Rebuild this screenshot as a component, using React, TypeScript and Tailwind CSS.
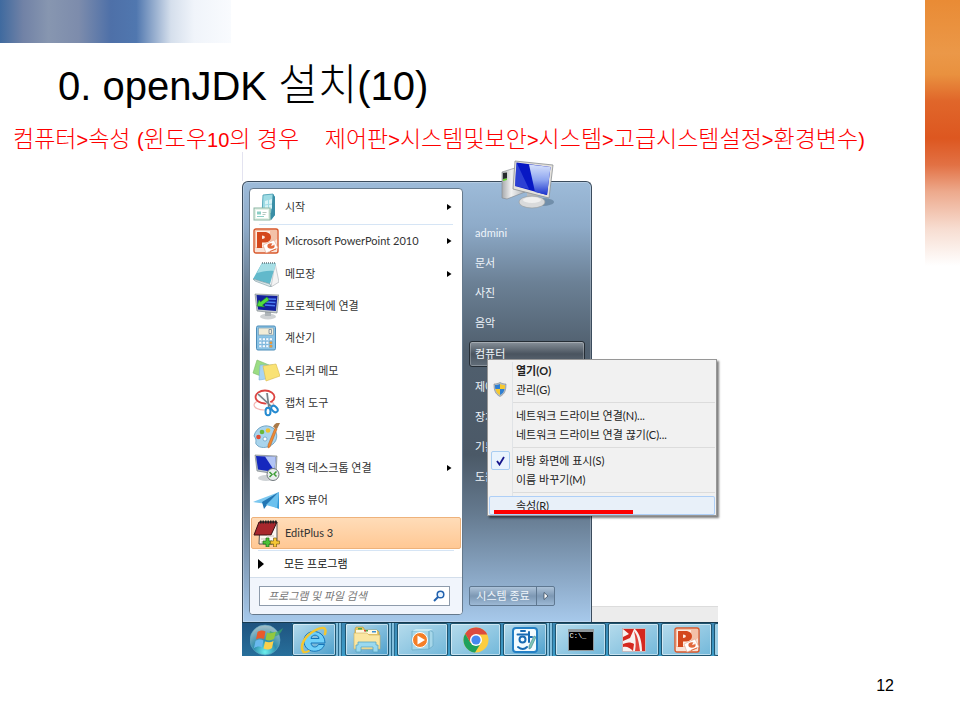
import type { ReactNode } from "react";

function StartGuideIcon() {
  return (
    <svg width="26" height="28" viewBox="0 0 26 28" aria-hidden="true">
      <path d="M10 2 L20 1 L22 4 V22 L18 27 L9 22 Z" fill="#5fb4c6" />
      <path d="M10 2 L20 1 V20 L9 22 Z" fill="#9edbe4" stroke="#4b9fb2" strokeWidth=".8" />
      <path d="M20 1 L22 4 V22 L18 27 L18 20 Z" fill="#3a8ea6" />
      <path d="M12 8 l3 -1 v4 l-3 .5z M16 7 l3 -1 v4.5 l-3 .5z M12 12.500 l3-.5 v4 l-3 .5z M16 12 l3-.5 v4 l-3 .5z" fill="#d9f4f7" />
      <rect x="1" y="15" width="16" height="12" fill="#e4f2e8" stroke="#8bb5a4" />
      <rect x="3" y="17" width="12" height="8" fill="#fff" />
      <path d="M4 18.500h4v3H4zM4 23h7v1H4z" fill="#8ccfc6" />
      <path d="M9.500 19h4v1h-4zM9.500 21h3v1h-3z" fill="#b5c8c0" />
    </svg>
  );
}

function PowerPointIcon() {
  return (
    <svg width="26" height="26" viewBox="0 0 26 26" aria-hidden="true">
      <rect x="1" y="1" width="24" height="24" rx="2" fill="#f9e3d8" stroke="#d8582b" strokeWidth="1.4" />
      <path d="M2 2h22v9L14 20H2z" fill="#f3c1a8" />
      <path d="M3 3h14v13l-5 3H3z" fill="#fdebe0" />
      <path d="M4 4h7.500c8.500 0 8.500 10 1 10.500H9V20H4z M9 7.500v3.500c3.800 0 3.800-3.500 0-3.500z" fill="#d4481c" fillRule="evenodd" />
      <path d="M10 17l11-5 4 8-12 5z" fill="#fff" stroke="#e5a58b" strokeWidth=".6" />
      <ellipse cx="18" cy="18" rx="3.600" ry="2.800" fill="#e2683c" />
      <path d="M18 18l1.500-3 2 2z" fill="#fff" />
      <path d="M17 23.500l6-2.500" stroke="#e2683c" />
    </svg>
  );
}

function NotepadIcon() {
  return (
    <svg width="26" height="26" viewBox="0 0 26 26" aria-hidden="true">
      <path d="M22 2l4 19-8 5z" fill="#f4f4f4" stroke="#a8afb3" strokeWidth=".6" />
      <path d="M9 2l14 0-6 21L0 18z" fill="#62b9cb" />
      <path d="M9 2l14 0-2 8C14 9 9 11 4 12z" fill="#a7dfe6" />
      <path d="M0 18l17 5 1 3L2 20z" fill="#dce8ea" stroke="#7a979f" strokeWidth=".6" />
      <path d="M9 2h14" stroke="#65777d" strokeWidth="1.500" strokeDasharray="1 1" />
    </svg>
  );
}

function ProjectorIcon() {
  return (
    <svg width="26" height="27" viewBox="0 0 26 27" aria-hidden="true">
      <ellipse cx="15" cy="23.500" rx="8" ry="3" fill="#cfd2d4" />
      <path d="M12 18h6v5h-6z" fill="#aeb4b8" />
      <path d="M2 1l24 1-2 18L4 18z" fill="#c6cccf" stroke="#747d83" strokeWidth=".6" />
      <path d="M3.500 2l21 1-1.600 15L5 16.500z" fill="#13209c" />
      <path d="M14 6l9 .3M13 9l9.500.5M12 12l10 .8" stroke="#4c7df0" strokeWidth="1.600" />
      <path d="M4 13l2-6 1.500 2L14 4l2 3-6.500 5 2 2z" fill="#52dd3d" stroke="#238a24" strokeWidth=".6" />
    </svg>
  );
}

function CalculatorIcon() {
  const cols = [6, 9.5, 13, 16.5];
  const rows = [13, 16.5, 20];
  return (
    <svg width="26" height="26" viewBox="0 0 26 26" aria-hidden="true">
      <rect x="3.500" y="1" width="19" height="24" rx="1.500" fill="#8cc4e6" stroke="#4d8db9" />
      <rect x="5.500" y="3" width="15" height="7" fill="#f2ecd7" stroke="#7ba0b6" strokeWidth=".7" />
      <path d="M16 4.500h2.500v4H16z" fill="none" stroke="#72869b" strokeWidth=".8" />
      {rows.map((y) =>
        cols.map((x) => (
          <rect key={`${x}-${y}`} x={x} y={y} width="2.700" height="2.500" fill={x > 16 && y > 13 ? "#f09a35" : "#f4faff"} stroke="#5b9cc9" strokeWidth=".3" />
        )),
      )}
    </svg>
  );
}

function StickyNotesIcon() {
  return (
    <svg width="28" height="26" viewBox="0 0 28 26" aria-hidden="true">
      <path d="M5 2l12 5-3 13L1 15z" fill="#9bdc83" stroke="#7ebb68" strokeWidth=".6" />
      <path d="M8 7h13v13l-14 2z" fill="#a7d4f3" stroke="#7bb2d8" strokeWidth=".6" />
      <path d="M11 8l13-2 4 12-14 5z" fill="#f9e274" stroke="#d8bb4b" strokeWidth=".6" />
    </svg>
  );
}

function SnippingIcon() {
  return (
    <svg width="26" height="28" viewBox="0 0 26 28" aria-hidden="true">
      <ellipse cx="11" cy="16" rx="10" ry="5" fill="none" stroke="#f3b5b2" strokeWidth="1.200" />
      <ellipse cx="12" cy="8" rx="9.500" ry="6.500" fill="#fff" stroke="#dc4340" strokeWidth="1.800" />
      <path d="M5 5l14 12M14 4l2 15" stroke="#f4f6f7" strokeWidth="3.500" />
      <path d="M5 5l14 13M14 4l2 15" stroke="#768086" strokeWidth="1.700" />
      <ellipse cx="15" cy="22.500" rx="2.500" ry="3.700" fill="#fff" stroke="#248ad0" strokeWidth="2" />
      <ellipse cx="21.500" cy="20" rx="3.700" ry="2.500" transform="rotate(45 21.500 20)" fill="#fff" stroke="#248ad0" strokeWidth="2" />
    </svg>
  );
}

function PaintIcon() {
  return (
    <svg width="27" height="27" viewBox="0 0 27 27" aria-hidden="true">
      <path d="M1 14C3 5 13 1 20 6c5 4 5 12 0 16-6 5-14 4-16 1-3-2 1-4-3-9z" fill="#a9d4ec" stroke="#6099bd" strokeWidth=".8" />
      <circle cx="5.500" cy="15" r="2.300" fill="#e04b34" />
      <circle cx="9" cy="10" r="2.300" fill="#68b83b" />
      <circle cx="15" cy="8.500" r="2.300" fill="#f1c22d" />
      <circle cx="12" cy="17" r="2" fill="#fff" stroke="#6099bd" strokeWidth=".7" />
      <path d="M22 6l2 1-7 18-2 1v-3z" fill="#ef8a34" stroke="#b25b1a" strokeWidth=".5" />
      <path d="M20 5c2-5 5-4 7-4l-3 6z" fill="#aa7a4a" />
    </svg>
  );
}

function RemoteDesktopIcon() {
  return (
    <svg width="28" height="28" viewBox="0 0 28 28" aria-hidden="true">
      <ellipse cx="14" cy="24" rx="8" ry="3" fill="#cfd3d6" />
      <path d="M3 1l22 1-1 18-19-3z" fill="#bdc6cb" stroke="#6c7378" strokeWidth=".6" />
      <path d="M4 2l19.500 1-1 15L6 15.500z" fill="#1528bd" />
      <path d="M13 2.500l10.500.5-1 14z" fill="#b2c4f5" />
      <circle cx="21" cy="20.500" r="6" fill="#e9edef" stroke="#70787c" />
      <path d="M17.500 18l2.500 2.500-2.500 2.500M24.500 17.500L22 20l2.500 2.500" stroke="#3d9d37" strokeWidth="1.500" fill="none" />
    </svg>
  );
}

function XpsIcon() {
  return (
    <svg width="27" height="22" viewBox="0 0 27 22" aria-hidden="true">
      <path d="M0 13L26 3 14 15z" fill="#7bc7ef" />
      <path d="M26 3v17l-9-4z" fill="#3499d7" />
      <path d="M26 3L9 13l2 7 3-4z" fill="#2376b3" />
      <path d="M26 3L13 16l11 3z" fill="#6cc1ee" />
    </svg>
  );
}

function EditPlusIcon() {
  return (
    <svg width="27" height="28" viewBox="0 0 27 28" aria-hidden="true">
      <path d="M7 3h17v22H6z" fill="#fbf7f2" stroke="#555" />
      <path d="M6 3h18L18 16H1z" fill="#a8272d" stroke="#3b1214" />
      <path d="M7 3h17" stroke="#222" strokeWidth="3" strokeDasharray="1.500 1" />
      <path d="M14 17h7M8 20h7M8 23h5" stroke="#c9bdb4" />
      <path d="M10 22h3v-3h3v3h3v3h-3v3h-3v-3h-3z" fill="#4cc238" stroke="#1e6a1a" strokeWidth=".7" />
      <path d="M17.500 22h3v-3h3v3h3v3h-3v3h-3v-3h-3z" fill="#f5c735" stroke="#826314" strokeWidth=".7" />
    </svg>
  );
}

function ComputerIcon() {
  return (
    <svg width="56" height="50" viewBox="0 0 56 50" aria-hidden="true">
      <defs>
        <linearGradient id="pcBody" x1="0" x2="1">
          <stop offset="0" stopColor="#a7aaad" />
          <stop offset=".4" stopColor="#f1f1f1" />
          <stop offset="1" stopColor="#b2b5b8" />
        </linearGradient>
        <linearGradient id="pcGlass" x1="0" y1="0" x2="0" y2="1">
          <stop offset="0" stopColor="#d6e1fb" />
          <stop offset=".5" stopColor="#8fa6f0" />
          <stop offset="1" stopColor="#1a31cc" />
        </linearGradient>
      </defs>
      <ellipse cx="42" cy="42" rx="12" ry="4" fill="#44617b" opacity=".45" />
      <path d="M2 12l13-4 10 24-18 7-5-1z" fill="url(#pcBody)" stroke="#83878b" strokeWidth=".6" />
      <path d="M3 13l4-.500v6L3 19z" fill="#25292c" />
      <path d="M3 19l4-.500v1.500L3 21z" fill="#63d82c" />
      <path d="M27 33h11v9H27z" fill="#b9bbbd" />
      <ellipse cx="32" cy="42" rx="13" ry="6" fill="#d9dadb" stroke="#989da1" strokeWidth=".7" />
      <ellipse cx="32" cy="40" rx="9" ry="3" fill="#efefef" />
      <path d="M15 1l38 4-4 33-36-9z" fill="#e4e2dd" stroke="#8b8f92" strokeWidth=".8" />
      <path d="M16.500 2.500l34 4.500-3.500 28L15 26z" fill="#0718c4" />
      <path d="M29 4.500L50.500 7 47 35l-12-3z" fill="url(#pcGlass)" />
      <path d="M16.500 2.500L29 29 15 26z" fill="#4a63e0" opacity=".55" />
    </svg>
  );
}

function ShieldIcon() {
  return (
    <svg width="14" height="15" viewBox="0 0 14 15" aria-hidden="true">
      <path d="M7 .5c2 1 4 1.500 6 1.500 0 6-1 10-6 12.500C2 12 1 8 1 2c2 0 4-.5 6-1.500z" fill="#b5bdc5" stroke="#7e878f" strokeWidth=".6" />
      <path d="M7 2v5H2.500C2 6 2 4.500 2 3c2 0 3.500-.3 5-1zM7 7h4.500c-.5 3-2 5-4.500 6z" fill="#2f7fd1" />
      <path d="M7 2c1.500.7 3 1 5 1 0 1.500 0 3-.500 4H7zM7 7v6C4.500 12 3 10 2.500 7z" fill="#f6c92f" />
    </svg>
  );
}

function StartOrb() {
  return (
    <svg width="34" height="32" viewBox="0 0 34 32" aria-hidden="true">
      <defs>
        <radialGradient id="orb" cx=".5" cy=".9" r=".85">
          <stop offset="0" stopColor="#6cf0ee" />
          <stop offset=".45" stopColor="#2f8fae" />
          <stop offset="1" stopColor="#9dbcc6" />
        </radialGradient>
      </defs>
      <circle cx="15" cy="16" r="15" fill="url(#orb)" stroke="#5fa9c4" strokeWidth=".6" />
      <path d="M20 7c5 3 9 0 13-3-3 8-8 10-14 8z" fill="#3ba66b" opacity=".7" />
      <path d="M7.500 8c3-2 5.500-2 8-.5L14 15c-2.500-1-5.500-1-8 .5z" fill="#ea5a2a" />
      <path d="M17 8.500c2.500 1 5.500 1 9-1L24 15c-3 1.500-5.500 2-8.500.5z" fill="#93c83e" />
      <path d="M5.500 17c2.500-1.500 5.500-2 8-.5L12 23.500c-2.500-1.500-5-1-8 .5z" fill="#69b9ee" />
      <path d="M15 17.500c3 1 5.500 1 8.500-.5L22 24c-3 2-5.500 2-8.500.5z" fill="#fbd04b" />
    </svg>
  );
}

function InternetExplorerIcon() {
  return (
    <svg width="28" height="28" viewBox="0 0 28 28" aria-hidden="true">
      <path d="M24.500 18.500C22 28 4 28 4 15S25 2 25 17H11c.5 5 6 5 7.500 1.500zM11 12.500h8c-.5-4.500-7.500-4.500-8 0z" fill="#6fd0fa" stroke="#1675b8" strokeWidth="1" fillRule="evenodd" />
      <path d="M3.500 26C-1 20 5 10 14 5s13-4 11 3" fill="none" stroke="#f3c631" strokeWidth="2.500" strokeLinecap="round" />
      <path d="M3.500 26c2 1 4 0 6-1.500" fill="none" stroke="#f3c631" strokeWidth="2" />
    </svg>
  );
}

function ExplorerIcon() {
  return (
    <svg width="28" height="27" viewBox="0 0 28 27" aria-hidden="true">
      <path d="M2 3l1-2h7l2 3h12l2 2v16H2z" fill="#e9c765" stroke="#b4933f" strokeWidth=".6" />
      <path d="M3 4h21v4H3z" fill="#fff8df" />
      <path d="M5 2h4v1.500H5zM12 4h3v1.500h-3z" fill="#4aa645" />
      <path d="M19 5h4v1.500h-4z" fill="#3f8fd2" />
      <path d="M11 4h2v1.500h-2z" fill="#db4b36" />
      <path d="M1 7h13l2 2h11v14H1z" fill="#fae6a2" stroke="#cdae5b" strokeWidth=".6" />
      <path d="M5 16h18v3h2v7h-5v-5H8v5H3v-7h2z" fill="#9ad9ef" stroke="#5ba4bf" strokeWidth=".8" />
    </svg>
  );
}

function MediaPlayerIcon() {
  return (
    <svg width="26" height="24" viewBox="0 0 26 24" aria-hidden="true">
      <path d="M2 3l17-1v19l-17 1zM19 2l4 2v14l-4 3z" fill="#a6d7e9" stroke="#6cacc8" strokeWidth=".8" />
      <path d="M2 3l4-2h17l-4 2z" fill="#c8e9f3" />
      <circle cx="10" cy="12" r="7.500" fill="#f47e27" stroke="#fff" strokeWidth="1" />
      <path d="M7.500 7.500v9L15 12z" fill="#fff" />
    </svg>
  );
}

function ChromeIcon() {
  return (
    <svg width="26" height="26" viewBox="0 0 26 26" aria-hidden="true">
      <circle cx="13" cy="13" r="12.500" fill="#fccd40" />
      <path d="M2.200 6.700A12.500 12.500 0 0 1 24.200 7.500H13L7.600 16z" fill="#dc4b3e" />
      <path d="M2.200 6.700A12.500 12.500 0 0 0 12 25.500l6-9.500-10.500 0z" fill="#1fa15d" />
      <circle cx="13" cy="13" r="6" fill="#fff" />
      <circle cx="13" cy="13" r="4.600" fill="#4688f1" />
    </svg>
  );
}

function HangulIcon() {
  return (
    <svg width="26" height="26" viewBox="0 0 26 26" aria-hidden="true">
      <rect x="1" y="1" width="24" height="24" rx="3" fill="#f3fbff" stroke="#237fc4" strokeWidth="2" />
      <path d="M9 4h4M5.500 7.500h10M17 5v10M17 10h3M6 20q5 4 9 0" stroke="#176bb3" strokeWidth="2" fill="none" strokeLinecap="round" />
      <circle cx="10.500" cy="12.500" r="3" fill="none" stroke="#176bb3" strokeWidth="2" />
      <path d="M22 9l2 1-5 11-2 1v-3z" fill="#7fc7b5" stroke="#3d7e91" strokeWidth=".6" />
    </svg>
  );
}

function ConsoleIcon() {
  return (
    <span className="block h-[22px] w-[26px] border border-t-[3px] border-[#8f989c] bg-black pl-px text-left font-['Liberation_Mono',monospace] text-[7px] leading-[8px] text-white">
      C:\_
    </span>
  );
}

function AcrobatIcon() {
  return (
    <svg width="24" height="24" viewBox="0 0 24 24" aria-hidden="true">
      <rect x=".5" y=".5" width="23" height="23" fill="#f8f2f0" stroke="#c7a6a3" strokeWidth=".6" />
      <path d="M1 1h11L8 10 1 13V9l6-3z" fill="#d5281f" />
      <path d="M13 1h10v22h-3C20 14 18 6 13 1z" fill="#d5281f" />
      <path d="M12 3c4 5 5 12 6 20h-5c1-6 1-12-1-20z" fill="#e0423a" />
      <path d="M1 16c4-2 8-2 11 0l-1 7C8 20 5 18 1 19z" fill="#d5281f" />
    </svg>
  );
}

const programs: { label: string; icon: ReactNode; submenu?: boolean; active?: boolean }[] = [
  { label: "Microsoft PowerPoint 2010", icon: <PowerPointIcon />, submenu: true },
  { label: "메모장", icon: <NotepadIcon />, submenu: true },
  { label: "프로젝터에 연결", icon: <ProjectorIcon /> },
  { label: "계산기", icon: <CalculatorIcon /> },
  { label: "스티커 메모", icon: <StickyNotesIcon /> },
  { label: "캡처 도구", icon: <SnippingIcon /> },
  { label: "그림판", icon: <PaintIcon /> },
  { label: "원격 데스크톱 연결", icon: <RemoteDesktopIcon />, submenu: true },
  { label: "XPS 뷰어", icon: <XpsIcon /> },
  { label: "EditPlus 3", icon: <EditPlusIcon />, active: true },
];

const places = ["admini", "문서", "사진", "음악"];
const lowerPlaces = ["제어판", "장치", "기본", "도움말"];

function Arrow() {
  return (
    <svg className="ml-auto" width="5" height="8" viewBox="0 0 5 8" aria-hidden="true">
      <path d="M0 1l4.500 3L0 7z" fill="#000" />
    </svg>
  );
}

function ProgramRow({ label, icon, submenu, active }: (typeof programs)[number]) {
  return (
    <button
      type="button"
      className={
        active
          ? "flex min-h-0 flex-1 items-center rounded-xs border border-[#eeb27b] bg-linear-to-b from-[#ffdcb8] to-[#ffc894] pr-2"
          : "flex min-h-0 flex-1 items-center border border-transparent pr-2"
      }
    >
      <span className="flex w-7 shrink-0 justify-center">{icon}</span>
      <span className="ml-[5px]">{label}</span>
      {submenu && <Arrow />}
    </button>
  );
}

function ProgramPane() {
  return (
    <div className="flex w-[214px] shrink-0 flex-col overflow-hidden rounded-[4px] border border-[#65798c] bg-white text-[#333]">
      <div className="flex h-[360px] flex-col px-px">
        <div className="flex h-[35px]">
          <ProgramRow label="시작" icon={<StartGuideIcon />} submenu />
        </div>
        <div className="mx-2 h-px bg-[#d6e5f5]" />
        <div className="flex flex-1 flex-col">
          {programs.map((p) => (
            <ProgramRow key={p.label} {...p} />
          ))}
        </div>
      </div>
      <div className="mx-2 mt-px h-px bg-[#d6e5f5]" />
      <button type="button" className="flex h-[26px] items-center pl-2 text-[#111]">
        <svg width="6" height="10" viewBox="0 0 6 10" aria-hidden="true">
          <path d="M0 0l6 5-6 5z" fill="#000" />
        </svg>
        <span className="ml-5">모든 프로그램</span>
      </button>
      <div className="flex-1 border-t border-[#d3deeb] bg-[#f1f5fc] pt-2 pr-3 pl-[9px]">
        <div className="flex h-5 items-center border border-[#8e9bab] bg-white pr-1 pl-2">
          <input
            type="search"
            aria-label="프로그램 및 파일 검색"
            placeholder="프로그램 및 파일 검색"
            className="w-0 flex-1 text-[11px] italic outline-none placeholder:text-[#777]"
          />
          <svg width="12" height="12" viewBox="0 0 12 12" aria-hidden="true">
            <circle cx="7.500" cy="4.500" r="3.300" fill="#e6f3ff" stroke="#2362ae" strokeWidth="1.500" />
            <path d="M5 7L1 11" stroke="#2362ae" strokeWidth="2" />
          </svg>
        </div>
      </div>
    </div>
  );
}

function PlacesPane() {
  return (
    <div className="relative flex flex-1 flex-col px-[6px] pt-[30px] text-[#eef4fa]">
      <div className="absolute -top-7 left-[37px]">
        <ComputerIcon />
      </div>
      {places.map((p) => (
        <button key={p} type="button" className="h-[30px] pl-[6px] text-left">
          {p}
        </button>
      ))}
      <button
        type="button"
        className="mt-[3px] h-[26px] rounded-[3px] border border-[#252d35] bg-linear-to-b from-[#88919a] via-[#4a545f] via-50% to-[#626e7a] pl-[5px] text-left inset-ring inset-ring-white/25"
      >
        컴퓨터
      </button>
      <div className="mt-[5px] flex flex-col">
        {lowerPlaces.map((p) => (
          <button key={p} type="button" className="h-[30px] pl-[6px] text-left">
            {p}
          </button>
        ))}
      </div>
      <div className="mt-auto mb-[9px] flex h-5 w-[86px] rounded-xs border border-[#5f7891] bg-linear-to-b from-[#adc3d9] via-[#7d98b4] via-50% to-[#9db9d5]">
        <button type="button" className="flex-1 whitespace-nowrap">
          시스템 종료
        </button>
        <button type="button" aria-label="종료 옵션" className="flex w-[18px] items-center justify-center border-l border-[#5f7891]">
          <svg width="6" height="8" viewBox="0 0 6 8" aria-hidden="true">
            <path d="M1 .5L5 4 1 7.500z" fill="#fff" stroke="#3b4d5f" strokeWidth=".8" />
          </svg>
        </button>
      </div>
    </div>
  );
}

function MenuItem({ children, icon }: { children: ReactNode; icon?: ReactNode }) {
  return (
    <button type="button" className="flex h-[19px] w-full items-center whitespace-nowrap">
      <span className="flex w-[22px] shrink-0 justify-center">{icon}</span>
      <span className="ml-[5px]">{children}</span>
    </button>
  );
}

function MenuRule() {
  return <div className="my-[3px] ml-6 h-px bg-[#dcdcdc]" />;
}

function ContextMenu() {
  return (
    <div className="absolute top-[207px] left-[245px] w-[230px] border border-[#979797] bg-[#f1f1f1] px-px pt-px text-[#222] shadow-[2px_2px_2px_rgba(0,0,0,0.5)]">
      <div className="absolute inset-y-[2px] left-6 w-px bg-[#e0e3e6]" />
      <div className="relative">
        <MenuItem>
          <strong className="font-bold">열기(O)</strong>
        </MenuItem>
        <MenuItem icon={<ShieldIcon />}>관리(G)</MenuItem>
        <MenuRule />
        <MenuItem>네트워크 드라이브 연결(N)...</MenuItem>
        <MenuItem>네트워크 드라이브 연결 끊기(C)...</MenuItem>
        <MenuRule />
        <MenuItem
          icon={
            <span className="flex size-[19px] items-center justify-center rounded-xs border border-[#a9cdf1] bg-[#e9f3fd]">
              <svg width="9" height="10" viewBox="0 0 9 10" aria-hidden="true">
                <path d="M1 5l2.500 3.500L8 1" fill="none" stroke="#15158c" strokeWidth="1.800" />
              </svg>
            </span>
          }
        >
          바탕 화면에 표시(S)
        </MenuItem>
        <MenuItem>이름 바꾸기(M)</MenuItem>
        <MenuRule />
        <div className="relative rounded-xs bg-[#e8f0f9] inset-ring inset-ring-[#aecff7]">
          <MenuItem>속성(R)</MenuItem>
          <div className="absolute bottom-px left-[5px] h-1 w-[139px] bg-[#fe0000]" />
        </div>
      </div>
    </div>
  );
}

function TaskButton({ label, stacked, children }: { label: string; stacked?: boolean; children: ReactNode }) {
  return (
    <div className={stacked ? "flex w-[52px] shrink-0" : "flex w-[53px] shrink-0"}>
      <button
        type="button"
        aria-label={label}
        className={
          stacked
            ? "flex w-11 items-center justify-center rounded-xs border border-[#1f546f] bg-linear-to-br from-[#b5dbec] to-[#4ba0cc] inset-ring inset-ring-white/50"
            : "flex w-[51px] items-center justify-center rounded-xs border border-[#1f546f] bg-linear-to-br from-[#b5dbec] to-[#72b8da] inset-ring inset-ring-white/50"
        }
      >
        {children}
      </button>
      {stacked && (
        <>
          <span className="w-[3px] border-r border-[#28698c] bg-[#83bfdd]" />
          <span className="w-[3px] border-r border-[#28698c] bg-[#83bfdd]" />
        </>
      )}
    </div>
  );
}

function Taskbar() {
  return (
    <div className="flex h-[34px] overflow-hidden border-t border-[#173a4f] bg-linear-to-b from-[#3c87b3] to-[#3a9cc9]">
      <button type="button" aria-label="시작" className="flex w-[50px] shrink-0 items-center justify-center bg-linear-to-b from-[#1f5480] to-[#276f9b]">
        <StartOrb />
      </button>
      <TaskButton label="Internet Explorer" stacked>
        <InternetExplorerIcon />
      </TaskButton>
      <div className="w-px shrink-0" />
      <TaskButton label="Windows 탐색기" stacked>
        <ExplorerIcon />
      </TaskButton>
      <TaskButton label="Windows Media Player">
        <MediaPlayerIcon />
      </TaskButton>
      <TaskButton label="Chrome">
        <ChromeIcon />
      </TaskButton>
      <TaskButton label="한글" stacked>
        <HangulIcon />
      </TaskButton>
      <TaskButton label="명령 프롬프트">
        <ConsoleIcon />
      </TaskButton>
      <TaskButton label="Adobe Reader">
        <AcrobatIcon />
      </TaskButton>
      <TaskButton label="PowerPoint">
        <PowerPointIcon />
      </TaskButton>
      <div className="flex-1 rounded-l-xs border border-r-0 border-[#1f546f] bg-[#9dcfe6]" />
    </div>
  );
}

function Screenshot() {
  return (
    <figure className="mx-auto w-[476px] font-['Lato','Noto_Sans_CJK_KR',sans-serif] text-[11px] leading-4">
      <div className="h-[29px] border-l border-[#e3e3f0]" />
      <div className="relative flex items-stretch">
        <div className="flex h-[441px] w-[350px] rounded-t-[6px] border border-b-0 border-[#3b4c5d] bg-[linear-gradient(180deg,#9dbbd9_0%,#8eabc9_10%,#6b8095_23%,#505f6e_38%,#4b5967_62%,#64798e_75%,#86a2bf_88%,#a7c9eb_100%)] pt-[6px] pb-[7px] pl-[6px] inset-ring inset-ring-white/25">
          <ProgramPane />
          <PlacesPane />
        </div>
        <div className="flex flex-1 flex-col justify-end">
          <div className="h-4 border-t border-[#dcdcdc] bg-[#ececec]" />
        </div>
        <div className="absolute -top-[29px]">
          <ContextMenu />
        </div>
      </div>
      <Taskbar />
    </figure>
  );
}

function Hangul({ children }: { children: ReactNode }) {
  return <span className="text-[23px]">{children}</span>;
}

export default function App() {
  return (
    <main className="relative flex min-h-screen flex-col overflow-x-hidden bg-white font-['Liberation_Sans','Noto_Sans_CJK_KR',sans-serif]">
      <div className="h-[43px] w-[231px] bg-[linear-gradient(90deg,#3f6a9f_0%,#7182a6_10%,#8796b0_21%,#7d8cac_34%,#4e70a8_48%,#5077af_59%,#8fa8cb_66%,#d5dfec_74%,#f0f4fa_84%,#f9fbfe_100%)]" />
      <div className="absolute top-0 right-0 h-[266px] w-[35px] bg-[linear-gradient(180deg,#e98b35_0%,#eb9848_20%,#e9913f_28%,#e0662a_38%,#dd5720_52%,#e27144_62%,#eda98c_72%,#f7ddd1_86%,#ffffff_100%)]" />
      <h1 className="mt-4 ml-[58px] h-[52px] text-[40px] leading-[52px] font-light whitespace-nowrap text-black">
        0. openJDK <span className="text-[43px]">설치</span>(10)
      </h1>
      <p className="mt-[14px] ml-[13px] h-[28px] text-[20px] leading-[28px] font-light whitespace-pre text-[#fe0000]">
        <Hangul>컴퓨터</Hangul>&gt;<Hangul>속성 </Hangul>(<Hangul>윈도우</Hangul>10<Hangul>의 경우{"    "}제어판</Hangul>&gt;<Hangul>시스템및보안</Hangul>&gt;<Hangul>시스템</Hangul>&gt;<Hangul>고급시스템설정</Hangul>&gt;<Hangul>환경변수</Hangul>)
      </p>
      <div className="-mt-px">
        <Screenshot />
      </div>
      <footer className="mt-auto mr-[66px] mb-6 text-right text-[16px] leading-5 text-black">12</footer>
    </main>
  );
}
